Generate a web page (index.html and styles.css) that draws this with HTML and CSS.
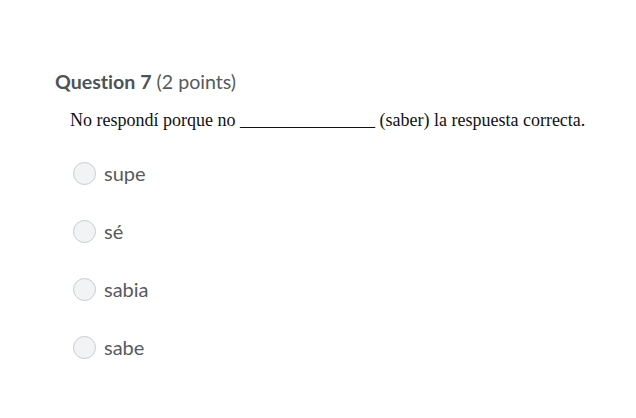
FILE: index.html
```html
<!DOCTYPE html>
<html lang="es">

<head>
    <meta charset="utf-8">
    <title>Question 7</title>
    <link rel="stylesheet" href="styles.css">
</head>

<body>

    <section class="question">
        <h2 class="question-title"><strong>Question 7</strong> (2 points)</h2>

        <p class="question-text">No respondí porque no _______________ (saber) la respuesta correcta.</p>

        <ul class="answers">
            <li><label class="answer"><span class="radio"></span>supe</label></li>
            <li><label class="answer"><span class="radio"></span>sé</label></li>
            <li><label class="answer"><span class="radio"></span>sabia</label></li>
            <li><label class="answer"><span class="radio"></span>sabe</label></li>
        </ul>
    </section>

</body>

</html>
```

FILE: styles.css
```css
body {
    margin: 0;
    background-color: white;
}

.question {
    padding: 70px 0 0 55px;
    font-variant-ligatures: none;
}

.question-title {
    margin: 0;
    font-family: Lato, "Liberation Sans", sans-serif;
    font-size: 19.6px;
    font-weight: normal;
    line-height: 24px;
    color: #565a5c;
}

.question-title strong {
    font-weight: bold;
    color: #4d5356;
}

.question-text {
    margin: 14px 0 0 15px;
    font-family: "Liberation Serif", serif;
    font-size: 18px;
    line-height: 24px;
    color: #111;
}

/* answer list */
.answers {
    list-style: none;
    margin: 29px 0 0 18px;
    padding: 0;
    display: flex;
    flex-direction: column;
    gap: 34px;
}

.answer {
    display: flex;
    align-items: center;
    gap: 8px;
    font-family: Lato, "Liberation Sans", sans-serif;
    font-size: 20px;
    line-height: 24px;
    color: #565a5c;
}

.radio {
    display: block;
    width: 21px;
    height: 21px;
    border: 1px solid #c7cdd1;
    border-radius: 50%;
    background-color: #f2f3f5;
}
```
